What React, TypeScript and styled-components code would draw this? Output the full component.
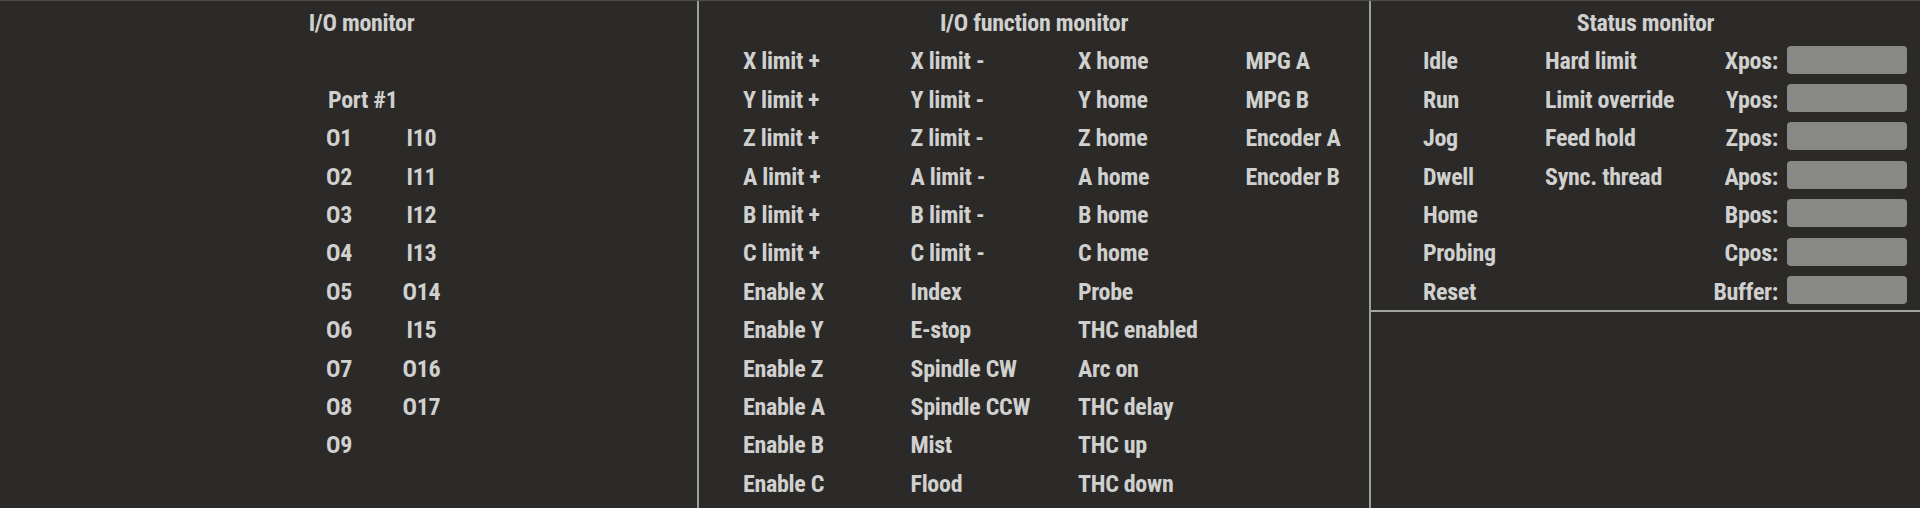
import styled, { createGlobalStyle } from "styled-components";

const GlobalStyle = createGlobalStyle`
  html, body {
    margin: 0;
    padding: 0;
    background: #2b2a28;
  }
  body {
    font-family: "Roboto Condensed", "Liberation Sans", Arial, sans-serif;
    font-weight: bold;
    font-size: 24px;
    letter-spacing: -0.3px;
    color: #d0d0cf;
  }
`;

const ROW = 38.4;

const Page = styled.div`
  display: flex;
  height: 508px;
  box-sizing: border-box;
  border-top: 1px solid #4e4d4b;
  background: #2b2a28;
  overflow: hidden;
`;

const Panel = styled.section<{ $width?: number; $last?: boolean }>`
  flex: ${(p) => (p.$width ? `0 0 ${p.$width}px` : "1 1 auto")};
  min-width: 0;
  box-sizing: border-box;
  border-right: ${(p) => (p.$last ? "none" : "2px solid #9d9d9b")};
  display: flex;
  flex-direction: column;
`;

const Body = styled.div`
  padding-top: 3px;
`;

const Title = styled.div<{ $shift?: number }>`
  height: ${ROW}px;
  line-height: ${ROW}px;
  text-align: center;
  padding-left: ${(p) => p.$shift ?? 0}px;
  white-space: nowrap;
`;

const Cell = styled.div<{ $align?: string }>`
  height: ${ROW}px;
  line-height: ${ROW}px;
  white-space: nowrap;
  text-align: ${(p) => p.$align ?? "left"};
`;

const Column = styled.div<{ $width?: number; $pad?: number }>`
  display: flex;
  flex-direction: column;
  flex: ${(p) => (p.$width ? `0 0 ${p.$width}px` : "1 1 0")};
  min-width: 0;
  padding-left: ${(p) => p.$pad ?? 0}px;
  box-sizing: border-box;
`;

const Spacer = styled.div`
  height: ${ROW}px;
`;

/* ---------- I/O monitor ---------- */

const PortBlock = styled.div`
  margin-left: 326px;
  display: flex;
  flex-direction: column;
`;

const PortHeader = styled(Cell)`
  padding-left: 2px;
`;

const PortGrid = styled.div`
  display: flex;
`;

/* ---------- I/O function monitor ---------- */

const FuncGrid = styled.div`
  display: grid;
  grid-template-columns: repeat(4, 1fr);
`;

/* ---------- Status monitor ---------- */

const StatusTop = styled.div`
  height: 311px;
  box-sizing: border-box;
  padding-top: 3px;
  border-bottom: 2px solid #a3a3a1;
`;

const StatusGrid = styled.div`
  display: flex;
  padding: 0 13px 0 52px;
`;

const PosRow = styled.div`
  height: ${ROW}px;
  display: flex;
  align-items: center;
  justify-content: flex-end;
  gap: 9px;
`;

const PosLabel = styled.span`
  line-height: ${ROW}px;
  white-space: nowrap;
`;

const PosBox = styled.div`
  width: 120px;
  height: 28px;
  margin-top: -4px;
  border-radius: 4px;
  background: #888887;
`;

const outputs = ["O1", "O2", "O3", "O4", "O5", "O6", "O7", "O8", "O9"];
const inputs = ["I10", "I11", "I12", "I13", "O14", "I15", "O16", "O17"];

const funcColumns = [
  ["X limit +", "Y limit +", "Z limit +", "A limit +", "B limit +", "C limit +", "Enable X", "Enable Y", "Enable Z", "Enable A", "Enable B", "Enable C"],
  ["X limit -", "Y limit -", "Z limit -", "A limit -", "B limit -", "C limit -", "Index", "E-stop", "Spindle CW", "Spindle CCW", "Mist", "Flood"],
  ["X home", "Y home", "Z home", "A home", "B home", "C home", "Probe", "THC enabled", "Arc on", "THC delay", "THC up", "THC down"],
  ["MPG A", "MPG B", "Encoder A", "Encoder B"],
];

const states = ["Idle", "Run", "Jog", "Dwell", "Home", "Probing", "Reset"];
const flags = ["Hard limit", "Limit override", "Feed hold", "Sync. thread"];
const positions = ["Xpos:", "Ypos:", "Zpos:", "Apos:", "Bpos:", "Cpos:", "Buffer:"];

export default function App() {
  return (
    <>
      <GlobalStyle />
      <Page>
        <Panel $width={699}>
          <Body>
            <Title $shift={26}>I/O monitor</Title>
            <Spacer />
            <PortBlock>
              <PortHeader>Port #1</PortHeader>
              <PortGrid>
                <Column $width={64}>
                  {outputs.map((o) => (
                    <Cell key={o}>{o}</Cell>
                  ))}
                </Column>
                <Column $width={63}>
                  {inputs.map((i) => (
                    <Cell key={i} $align="center">{i}</Cell>
                  ))}
                </Column>
              </PortGrid>
            </PortBlock>
          </Body>
        </Panel>

        <Panel $width={672}>
          <Body>
            <Title>I/O function monitor</Title>
            <FuncGrid>
              {funcColumns.map((col, idx) => (
                <Column key={idx} $pad={44}>
                  {col.map((f) => (
                    <Cell key={f}>{f}</Cell>
                  ))}
                </Column>
              ))}
            </FuncGrid>
          </Body>
        </Panel>

        <Panel $last>
          <StatusTop>
            <Title>Status monitor</Title>
            <StatusGrid>
              <Column $width={122}>
                {states.map((s) => (
                  <Cell key={s}>{s}</Cell>
                ))}
              </Column>
              <Column>
                {flags.map((f) => (
                  <Cell key={f}>{f}</Cell>
                ))}
              </Column>
              <Column $width={200}>
                {positions.map((p) => (
                  <PosRow key={p}>
                    <PosLabel>{p}</PosLabel>
                    <PosBox />
                  </PosRow>
                ))}
              </Column>
            </StatusGrid>
          </StatusTop>
        </Panel>
      </Page>
    </>
  );
}
